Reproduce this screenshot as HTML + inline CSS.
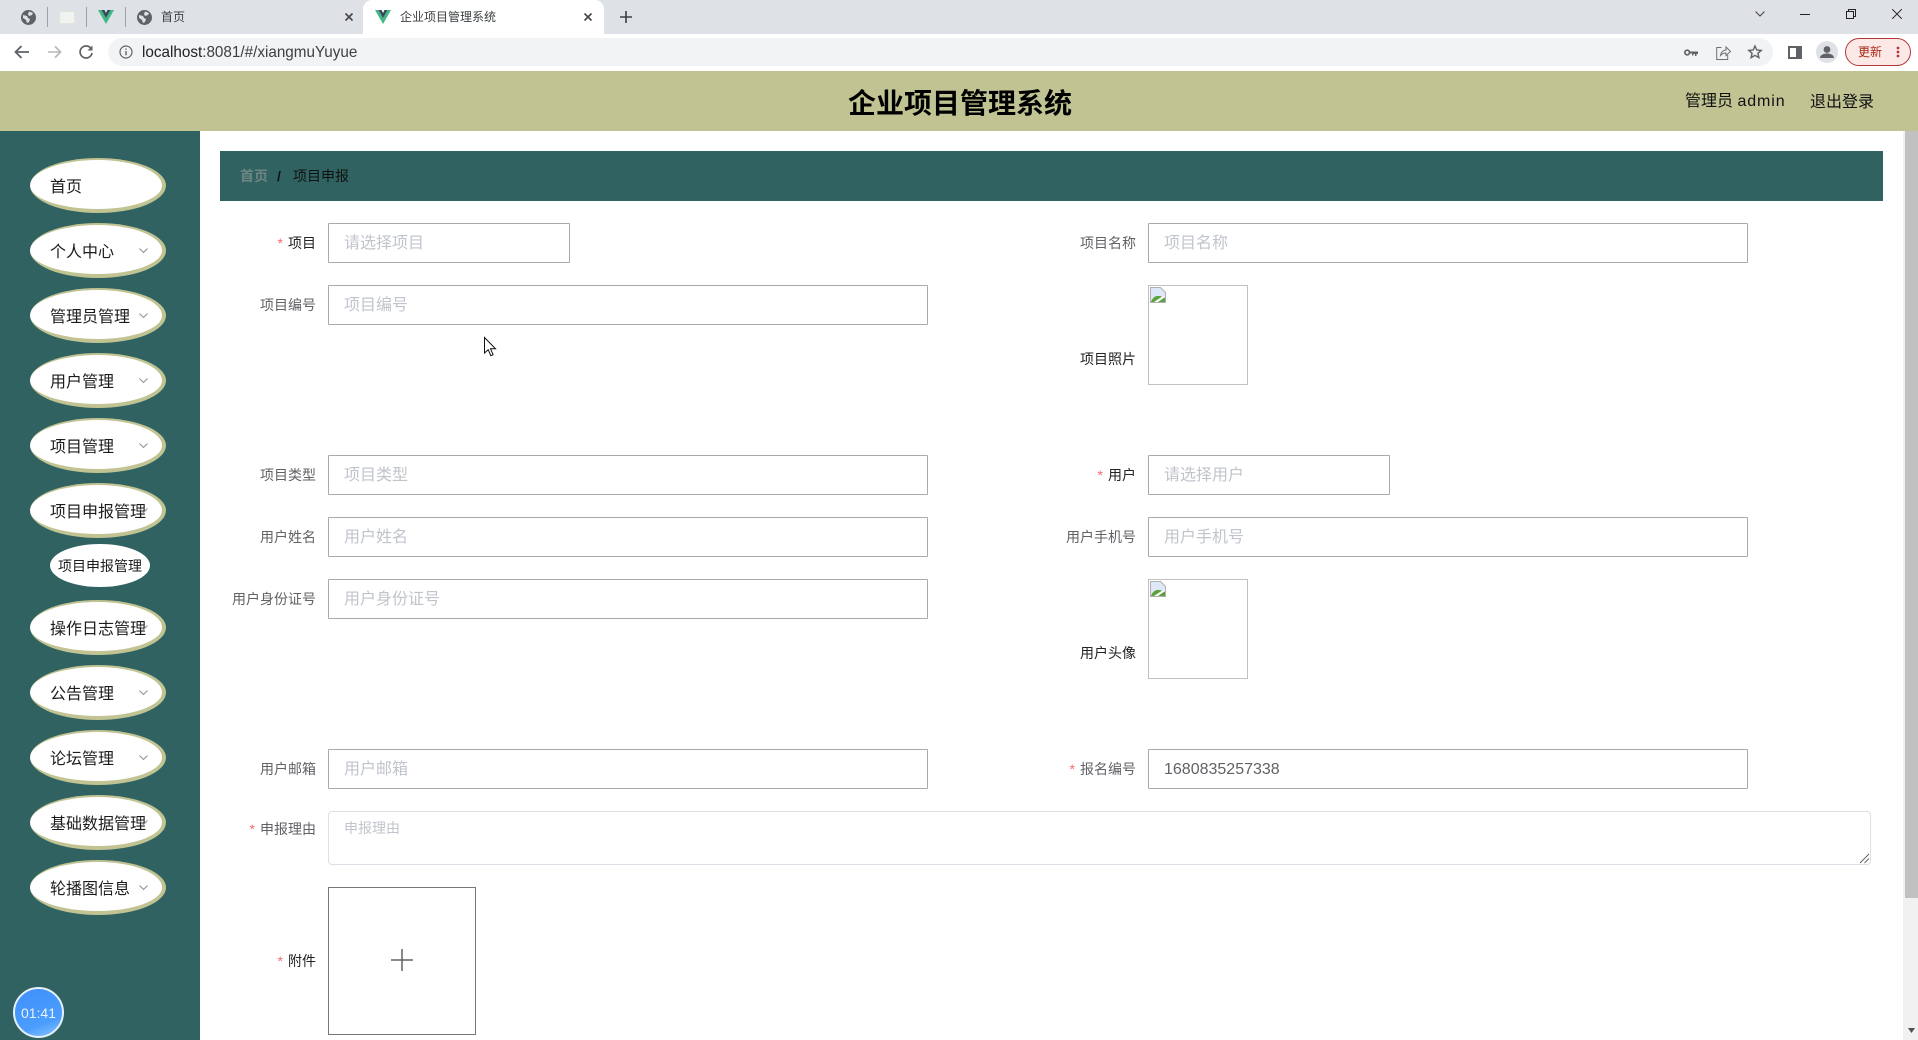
<!DOCTYPE html>
<html><head><meta charset="utf-8"><title>企业项目管理系统</title>
<style>
html,body{margin:0;padding:0;width:1918px;height:1040px;overflow:hidden;background:#fff}
body{position:relative;font-family:"Liberation Sans","Noto Sans CJK SC",sans-serif}
.a{position:absolute;white-space:nowrap}
svg{position:absolute;overflow:visible}
.pill{position:absolute;left:30px;width:136px;height:55px;box-sizing:border-box;background:#fff;border-radius:50%;border-style:solid;border-color:#c1c393;border-width:2px 4px 4px 0;font-size:16px;line-height:56px;color:#1c1c1c;padding-left:20px;white-space:nowrap}
.pill svg{left:109px;top:23px}
.ipt{position:absolute;box-sizing:border-box;height:40px;border:1px solid #aaa;border-radius:1px;background:#fff;font-size:16px;line-height:40px;padding-left:15px;color:#c0c4cc;white-space:nowrap}
.lb{position:absolute;font-size:14px;line-height:20px;text-align:right;color:#606266;white-space:nowrap}
.lb i{font-style:normal;color:#f56c6c;margin-right:5px}
.dk{color:#222}
.im{position:absolute;box-sizing:border-box;width:100px;height:100px;border:1px solid #c0c0c0;background:#fff}
</style></head><body>

<!-- browser chrome -->
<div class="a" style="left:0;top:0;width:1918px;height:34px;background:#dee1e6"></div>
<div class="a" style="left:0;top:34px;width:1918px;height:37px;background:#fff"></div>
<div class="a" style="left:363px;top:0;width:241px;height:34px;background:#fff;border-radius:9px 9px 0 0"></div>

<svg style="left:21px;top:10px" width="15" height="15" viewBox="0 0 15 15"><circle cx="7.5" cy="7.5" r="7.5" fill="#5f6368"/><path d="M2 5l4 1 1 2 2 1-1 3-2 1-1-3-3-2zM8 1.500l4 1.500-1 2-3 1-1-2z" fill="#dee1e6"/></svg>
<div class="a" style="left:47px;top:7px;width:1px;height:20px;background:#9ea1a6"></div>
<div class="a" style="left:59px;top:11px;width:16px;height:13px;background:#f1f3f0;border:1px solid #dde8d8;box-sizing:border-box"></div>
<div class="a" style="left:86px;top:7px;width:1px;height:20px;background:#9ea1a6"></div>
<svg style="left:98px;top:10px" width="16" height="14" viewBox="0 0 16 14"><path d="M0 0h3.500L8 8l4.500-8H16L8 14z" fill="#41b883"/><path d="M3.500 0h3L8 3l1.500-3h3L8 8z" fill="#35495e"/></svg>
<div class="a" style="left:125px;top:7px;width:1px;height:20px;background:#9ea1a6"></div>
<svg style="left:137px;top:10px" width="15" height="15" viewBox="0 0 15 15"><circle cx="7.500" cy="7.500" r="7.500" fill="#5f6368"/><path d="M2 5l4 1 1 2 2 1-1 3-2 1-1-3-3-2zM8 1.500l4 1.500-1 2-3 1-1-2z" fill="#dee1e6"/></svg>
<div class="a" style="left:161px;top:9px;font-size:12px;line-height:17px;color:#3c4043">首页</div>
<svg style="left:345px;top:13px" width="8" height="8" viewBox="0 0 8 8"><path d="M.5.500l7 7M7.500.500l-7 7" stroke="#45474a" stroke-width="1.600"/></svg>
<svg style="left:375px;top:10px" width="16" height="14" viewBox="0 0 16 14"><path d="M0 0h3.500L8 8l4.500-8H16L8 14z" fill="#41b883"/><path d="M3.500 0h3L8 3l1.500-3h3L8 8z" fill="#35495e"/></svg>
<div class="a" style="left:400px;top:9px;font-size:12px;line-height:17px;color:#3c4043">企业项目管理系统</div>
<svg style="left:584px;top:13px" width="8" height="8" viewBox="0 0 8 8"><path d="M.5.500l7 7M7.500.500l-7 7" stroke="#45474a" stroke-width="1.600"/></svg>
<svg style="left:620px;top:11px" width="12" height="12" viewBox="0 0 12 12"><path d="M6 0v12M0 6h12" stroke="#3c4043" stroke-width="1.600"/></svg>

<svg style="left:1755px;top:11px" width="10" height="6" viewBox="0 0 10 6"><path d="M.5.500L5 5 9.500.500" fill="none" stroke="#444" stroke-width="1"/></svg>
<div class="a" style="left:1800px;top:14px;width:10px;height:1px;background:#222"></div>
<svg style="left:1846px;top:9px" width="10" height="10" viewBox="0 0 10 10"><path d="M.5 2.500h7v7h-7zM2.500 2.500v-2h7v7h-2" fill="none" stroke="#222" stroke-width="1"/></svg>
<svg style="left:1892px;top:9px" width="10" height="10" viewBox="0 0 10 10"><path d="M.2.200l9.600 9.600M9.800.200L.2 9.800" stroke="#222" stroke-width="1"/></svg>

<svg style="left:14px;top:45px" width="16" height="14" viewBox="0 0 16 14"><path d="M15 7H2M7.500 1L1.500 7l6 6" fill="none" stroke="#5f6368" stroke-width="1.800"/></svg>
<svg style="left:47px;top:45px" width="15" height="14" viewBox="0 0 16 14"><path d="M1 7h13M8.500 1l6 6-6 6" fill="none" stroke="#b6b8bb" stroke-width="1.700"/></svg>
<svg style="left:79px;top:45px" width="14" height="14" viewBox="0 0 14 14"><path d="M12.300 4A6 6 0 1 0 13 8" fill="none" stroke="#5f6368" stroke-width="1.700"/><path d="M13.500 0.500v5h-5z" fill="#5f6368"/></svg>
<div class="a" style="left:108px;top:38px;width:1665px;height:28px;background:#f1f3f4;border-radius:14px"></div>
<svg style="left:119px;top:45px" width="14" height="14" viewBox="0 0 14 14"><circle cx="7" cy="7" r="6" fill="none" stroke="#5f6368" stroke-width="1.200"/><path d="M7 6v4.200M7 3.500v1.300" stroke="#5f6368" stroke-width="1.400"/></svg>
<div class="a" style="left:142px;top:43px;font-size:15.250px;line-height:19px;color:#3c4043"><span style="color:#202124">localhost</span>:8081/#/xiangmuYuyue</div>
<svg style="left:1684px;top:49px" width="14" height="7" viewBox="0 0 14 7"><circle cx="3.200" cy="3.500" r="2.300" fill="none" stroke="#5f6368" stroke-width="1.700"/><path d="M5 2.500h9V5h-1.500v2H11V5H9.500v1.500H8V4.500H5z" fill="#5f6368"/></svg>
<svg style="left:1716px;top:45px" width="15" height="15" viewBox="0 0 15 15"><path d="M5.500 2.500H.7v12h11V10M4.500 10.500C5 7 7.500 5 10 5V2l4.500 4.500L10 10.500V8c-2 0-4 .8-5.500 2.500z" fill="none" stroke="#6c7074" stroke-width="1"/></svg>
<svg style="left:1748px;top:45px" width="14" height="14" viewBox="0 0 14 14"><path d="M7 1l1.800 4 4.400.4-3.300 2.900 1 4.300L7 10.400l-3.900 2.200 1-4.300L.8 5.400 5.200 5z" fill="none" stroke="#5f6368" stroke-width="1.400"/></svg>
<div class="a" style="left:1788px;top:46px;width:14px;height:13px;box-sizing:border-box;border:2px solid #5f6368;border-right-width:6px;background:#fff"></div>
<svg style="left:1816px;top:41px" width="22" height="22" viewBox="0 0 22 22"><circle cx="11" cy="11" r="11" fill="#dee1e6"/><circle cx="11" cy="8.500" r="3.400" fill="#5f6368"/><path d="M4 17c0-3.500 4.500-4.500 7-4.500s7 1 7 4.500z" fill="#5f6368"/></svg>
<div class="a" style="left:1845px;top:38px;width:66px;height:28px;box-sizing:border-box;background:#fce8e6;border:1px solid #b3363a;border-radius:14px"></div>
<div class="a" style="left:1858px;top:44px;font-size:12px;line-height:17px;color:#a52714">更新</div>
<svg style="left:1896px;top:46px" width="4" height="12" viewBox="0 0 4 12"><circle cx="2" cy="2" r="1.400" fill="#b3363a"/><circle cx="2" cy="6" r="1.400" fill="#b3363a"/><circle cx="2" cy="10" r="1.400" fill="#b3363a"/></svg>

<!-- header -->
<div class="a" style="left:0;top:71px;width:1918px;height:60px;background:#c1c393"></div>
<div class="a" style="left:660px;top:84px;width:600px;text-align:center;font-size:28px;line-height:40px;font-weight:bold;color:#000">企业项目管理系统</div>
<div class="a" style="left:1685px;top:91px;font-size:16px;line-height:22px;color:#111">管理员 <span style="letter-spacing:.9px">admin</span></div>
<div class="a" style="left:1810px;top:92px;font-size:16px;line-height:22px;color:#111">退出登录</div>

<!-- sidebar -->
<div class="a" style="left:0;top:131px;width:200px;height:909px;background:#2f6260"></div>
<div class="pill" style="top:158px">首页</div>
<div class="pill" style="top:223px">个人中心<svg width="9" height="5" viewBox="0 0 9 5"><path d="M.5.500l4 4 4-4" fill="none" stroke="#8d8f94"/></svg></div>
<div class="pill" style="top:288px">管理员管理<svg width="9" height="5" viewBox="0 0 9 5"><path d="M.5.500l4 4 4-4" fill="none" stroke="#8d8f94"/></svg></div>
<div class="pill" style="top:353px">用户管理<svg width="9" height="5" viewBox="0 0 9 5"><path d="M.5.500l4 4 4-4" fill="none" stroke="#8d8f94"/></svg></div>
<div class="pill" style="top:418px">项目管理<svg width="9" height="5" viewBox="0 0 9 5"><path d="M.5.500l4 4 4-4" fill="none" stroke="#8d8f94"/></svg></div>
<div class="pill" style="top:483px">项目申报管理<svg width="9" height="5" viewBox="0 0 9 5"><path d="M.5.500l4 4 4-4" fill="none" stroke="#8d8f94"/></svg></div>
<div class="a" style="left:50px;top:544px;width:100px;height:43px;background:#fff;border-radius:50%;font-size:14px;line-height:44px;text-align:center;color:#1c1c1c">项目申报管理</div>
<div class="pill" style="top:600px">操作日志管理<svg width="9" height="5" viewBox="0 0 9 5"><path d="M.5.500l4 4 4-4" fill="none" stroke="#8d8f94"/></svg></div>
<div class="pill" style="top:665px">公告管理<svg width="9" height="5" viewBox="0 0 9 5"><path d="M.5.500l4 4 4-4" fill="none" stroke="#8d8f94"/></svg></div>
<div class="pill" style="top:730px">论坛管理<svg width="9" height="5" viewBox="0 0 9 5"><path d="M.5.500l4 4 4-4" fill="none" stroke="#8d8f94"/></svg></div>
<div class="pill" style="top:795px">基础数据管理<svg width="9" height="5" viewBox="0 0 9 5"><path d="M.5.500l4 4 4-4" fill="none" stroke="#8d8f94"/></svg></div>
<div class="pill" style="top:860px">轮播图信息<svg width="9" height="5" viewBox="0 0 9 5"><path d="M.5.500l4 4 4-4" fill="none" stroke="#8d8f94"/></svg></div>
<div class="a" style="left:13px;top:987px;width:51px;height:51px;box-sizing:border-box;border:2px solid #e4f1f8;border-radius:50%;background:linear-gradient(160deg,#3f8ffb,#4b9dfd 70%,#8cc4fb);font-size:14px;line-height:48px;text-align:center;color:#e8f3ff">01:41</div>

<!-- breadcrumb -->
<div class="a" style="left:220px;top:151px;width:1663px;height:50px;background:#2f6260"></div>
<div class="a" style="left:240px;top:166px;font-size:14px;line-height:20px;color:#6d8583;font-weight:bold">首页</div>
<div class="a" style="left:277px;top:166px;font-size:14px;line-height:20px;color:#111;font-weight:bold">/</div>
<div class="a" style="left:293px;top:166px;font-size:14px;line-height:20px;color:#111">项目申报</div>

<!-- form -->
<div class="lb dk" style="right:1602px;top:233px"><i>*</i>项目</div>
<div class="ipt" style="left:328px;top:223px;width:242px">请选择项目</div>
<div class="lb" style="right:782px;top:233px">项目名称</div>
<div class="ipt" style="left:1148px;top:223px;width:600px">项目名称</div>

<div class="lb" style="right:1602px;top:295px">项目编号</div>
<div class="ipt" style="left:328px;top:285px;width:600px">项目编号</div>
<div class="lb dk" style="right:782px;top:349px">项目照片</div>
<div class="im" style="left:1148px;top:285px"><svg style="left:1px;top:1px" width="16" height="16" viewBox="0 0 16 16"><path d="M.5.500h10l5 5v10H.5z" fill="#dfe8f8" stroke="#b0b0b0"/><path d="M1 15c2-6 7-8 14-4v4z" fill="#5ca23c"/><path d="M4 15l9-6 2 1-7 5z" fill="#fff"/></svg></div>

<div class="lb" style="right:1602px;top:465px">项目类型</div>
<div class="ipt" style="left:328px;top:455px;width:600px">项目类型</div>
<div class="lb dk" style="right:782px;top:465px"><i>*</i>用户</div>
<div class="ipt" style="left:1148px;top:455px;width:242px">请选择用户</div>

<div class="lb" style="right:1602px;top:527px">用户姓名</div>
<div class="ipt" style="left:328px;top:517px;width:600px">用户姓名</div>
<div class="lb" style="right:782px;top:527px">用户手机号</div>
<div class="ipt" style="left:1148px;top:517px;width:600px">用户手机号</div>

<div class="lb" style="right:1602px;top:589px">用户身份证号</div>
<div class="ipt" style="left:328px;top:579px;width:600px">用户身份证号</div>
<div class="lb dk" style="right:782px;top:643px">用户头像</div>
<div class="im" style="left:1148px;top:579px"><svg style="left:1px;top:1px" width="16" height="16" viewBox="0 0 16 16"><path d="M.5.500h10l5 5v10H.5z" fill="#dfe8f8" stroke="#b0b0b0"/><path d="M1 15c2-6 7-8 14-4v4z" fill="#5ca23c"/><path d="M4 15l9-6 2 1-7 5z" fill="#fff"/></svg></div>

<div class="lb" style="right:1602px;top:759px">用户邮箱</div>
<div class="ipt" style="left:328px;top:749px;width:600px">用户邮箱</div>
<div class="lb" style="right:782px;top:759px"><i>*</i>报名编号</div>
<div class="ipt" style="left:1148px;top:749px;width:600px;color:#606266">1680835257338</div>

<div class="lb" style="right:1602px;top:819px"><i>*</i>申报理由</div>
<div class="a" style="left:328px;top:811px;width:1543px;height:54px;box-sizing:border-box;border:1px solid #dcdfe6;border-radius:4px;font-size:14px;line-height:20px;padding:6px 15px;color:#c0c4cc">申报理由
<svg style="right:1px;bottom:1px" width="9" height="9" viewBox="0 0 9 9"><path d="M0 9L9 0M4.500 9L9 4.500" stroke="#666" stroke-width="1"/></svg></div>

<div class="lb dk" style="right:1602px;top:951px"><i>*</i>附件</div>
<div class="a" style="left:328px;top:887px;width:148px;height:148px;box-sizing:border-box;border:1px solid #777;background:#fff"></div>
<svg style="left:391px;top:949px" width="22" height="22" viewBox="0 0 22 22"><path d="M11 0v22M0 11h22" stroke="#606266" stroke-width="1.500"/></svg>

<!-- cursor -->
<svg style="left:484px;top:337px" width="13" height="20" viewBox="0 0 13 20"><path d="M.5.500v15.500l3.700-3.300 2.600 6 2.300-1-2.600-5.900h5z" fill="#fff" stroke="#111" stroke-width="1"/></svg>

<!-- scrollbar -->
<div class="a" style="left:1903px;top:131px;width:15px;height:909px;background:#f1f1f1"></div>
<div class="a" style="left:1905px;top:131px;width:13px;height:767px;background:#c1c1c1"></div>
<svg style="left:1908px;top:1028px" width="7" height="5" viewBox="0 0 7 5"><path d="M0 0h7L3.500 5z" fill="#505050"/></svg>

</body></html>
